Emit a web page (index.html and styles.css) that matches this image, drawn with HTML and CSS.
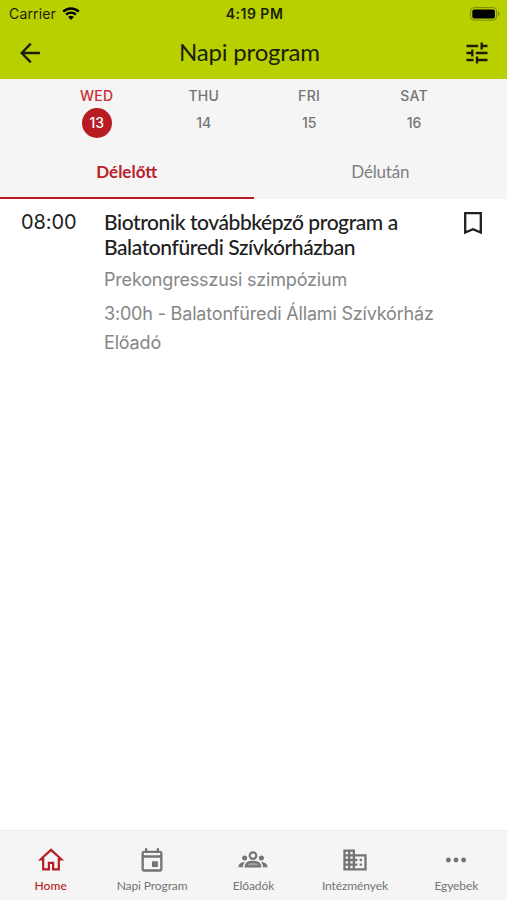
FILE: index.html
```html
<!DOCTYPE html>
<html lang="hu">
<head>
    <meta charset="UTF-8">
    <meta name="viewport" content="width=device-width, initial-scale=1.0">
    <title>Napi program</title>
    <link rel="stylesheet" href="styles.css">
</head>
<body>
    <div class="app">
        <header class="header">
            <div class="status-bar">
                <div class="carrier">
                    <span>Carrier</span>
                    <svg class="wifi" viewBox="0 0 18 13">
                        <path d="M1.2 4.6 A11.2 11.2 0 0 1 16.8 4.6" />
                        <path d="M4.1 7.6 A7 7 0 0 1 13.9 7.6" />
                        <path class="dot" d="M9 12.9 L6.2 10 A4 4 0 0 1 11.8 10 Z" />
                    </svg>
                </div>
                <span class="clock">4:19 PM</span>
                <svg class="battery" viewBox="0 0 30 14">
                    <rect class="case" x="0.6" y="0.6" width="26" height="12.6" rx="3.6" />
                    <rect x="2.3" y="2.4" width="22.6" height="9" rx="2" />
                    <path class="cap" d="M28 4.6 a2.6 2.6 0 0 1 0 4.6 z" />
                </svg>
            </div>
            <div class="toolbar">
                <svg class="icon back" viewBox="0 0 24 24"><path d="M20.5 12 H5 M12.7 4 L4.9 12 L12.7 20" /></svg>
                <h1>Napi program</h1>
                <svg class="icon" viewBox="0 0 24 24"><path d="M3 17v2h6v-2H3zM3 5v2h10V5H3zm10 16v-2h8v-2h-8v-2h-2v6h2zM7 9v2H3v2h4v2h2V9H7zm14 4v-2H11v2h10zm-6-4h2V7h4V5h-4V3h-2v6z" /></svg>
            </div>
        </header>

        <!-- Day picker -->
        <div class="days">
            <div class="day active"><span class="weekday">WED</span><span class="date">13</span></div>
            <div class="day"><span class="weekday">THU</span><span class="date">14</span></div>
            <div class="day"><span class="weekday">FRI</span><span class="date">15</span></div>
            <div class="day"><span class="weekday">SAT</span><span class="date">16</span></div>
        </div>

        <div class="tabs">
            <div class="tab active">Délelőtt</div>
            <div class="tab">Délután</div>
        </div>

        <main class="program">
            <article class="event">
                <div class="time">08:00</div>
                <div class="info">
                    <h2>Biotronik továbbképző program a<br>Balatonfüredi Szívkórházban</h2>
                    <p class="category">Prekongresszusi szimpózium</p>
                    <p class="place">3:00h - Balatonfüredi Állami Szívkórház</p>
                    <p class="speaker">Előadó</p>
                </div>
                <svg class="bookmark" viewBox="0 0 20 24"><path d="M2.2 2.2 H17.8 V21.5 L10 18.2 L2.2 21.5 Z" /></svg>
            </article>
        </main>

        <nav class="bottom-nav">
            <div class="nav-item active">
                <svg class="icon" viewBox="0 0 24 24"><path d="M12 3.3 L3.2 11.4 H5.3 V20 H10.2 V14.5 H13.8 V20 H18.7 V11.4 H20.8 Z" /></svg>
                <span class="nav-label">Home</span>
            </div>
            <div class="nav-item">
                <svg class="icon" viewBox="0 0 24 24"><path d="M19 4h-1V2h-2v2H8V2H6v2H5c-1.1 0-2 .9-2 2v14c0 1.1.9 2 2 2h14c1.1 0 2-.9 2-2V6c0-1.1-.9-2-2-2zm0 16H5V10h14v10zm0-12H5V6h14v2zm-7 5h5v5h-5z" /></svg>
                <span class="nav-label">Napi Program</span>
            </div>
            <div class="nav-item">
                <svg class="icon people" viewBox="0 0 30 24">
                    <circle class="ring" cx="15" cy="7.6" r="3.3" />
                    <path class="ring body" d="M7.8 18.3 C8 15.5 11 13.9 15 13.9 S22 15.5 22.2 18.3 Z" />
                    <circle cx="6.6" cy="10" r="2.5" />
                    <circle cx="23.4" cy="10" r="2.5" />
                    <path d="M0.5 19.3 C0.5 16.3 2.6 14 6.9 14 C5.6 15.3 5 17.3 5 19.3 Z" />
                    <path d="M29.5 19.3 C29.5 16.3 27.4 14 23.1 14 C24.4 15.3 25 17.3 25 19.3 Z" />
                </svg>
                <span class="nav-label">Előadók</span>
            </div>
            <div class="nav-item">
                <svg class="icon" viewBox="0 0 24 24"><path d="M12 7V3H2v18h20V7H12zM6 19H4v-2h2v2zm0-4H4v-2h2v2zm0-4H4V9h2v2zm0-4H4V5h2v2zm4 12H8v-2h2v2zm0-4H8v-2h2v2zm0-4H8V9h2v2zm0-4H8V5h2v2zm10 12h-8v-2h2v-2h-2v-2h2v-2h-2V9h8v10zm-2-8h-2v2h2v-2zm0 4h-2v2h2v-2z" /></svg>
                <span class="nav-label">Intézmények</span>
            </div>
            <div class="nav-item">
                <svg class="icon" viewBox="0 0 24 24"><circle cx="5.5" cy="12" r="2.1" /><circle cx="12" cy="12" r="2.1" /><circle cx="18.5" cy="12" r="2.1" /></svg>
                <span class="nav-label">Egyebek</span>
            </div>
        </nav>
    </div>
</body>
</html>
```

FILE: styles.css
```css
* {
    margin: 0;
    padding: 0;
    box-sizing: border-box;
}

body {
    font-family: Inter, "Liberation Sans", sans-serif;
    background-color: #fff;
    color: #202020;
}

svg {
    display: block;
    flex: none;
    fill: currentColor;
}

.app {
    height: 900px;
    display: flex;
    flex-direction: column;
    overflow: hidden;
}

.header {
    height: 79px;
    background-color: #b8cf00;
    color: #1c1f08;
}

.status-bar {
    height: 27px;
    padding: 0 7px 0 9px;
    display: grid;
    grid-template-columns: 1fr auto 1fr;
    align-items: center;
    font-size: 14px;
}

.carrier {
    display: flex;
    align-items: center;
    gap: 6px;
    letter-spacing: 0.15px;
}

.wifi {
    width: 18px;
    height: 13px;
    fill: none;
    stroke: #000;
    stroke-width: 2.4;
}

.wifi .dot {
    fill: #000;
    stroke: none;
}

.clock {
    font-weight: 600;
    letter-spacing: 0.5px;
}

.battery {
    width: 30px;
    height: 14px;
    justify-self: end;
    fill: #000;
}

.battery .case {
    fill: none;
    stroke: #7c8b0b;
}

.battery .cap {
    fill: #7c8b0b;
}

.toolbar {
    height: 50px;
    padding: 1px 16px 0 16px;
    display: grid;
    grid-template-columns: 28px 1fr 28px;
    align-items: center;
}

.icon {
    width: 28px;
    height: 28px;
}

.back {
    fill: none;
    stroke: currentColor;
    stroke-width: 2;
}

h1 {
    padding: 0 8px 2px 0;
    font-family: Lato, sans-serif;
    font-size: 24px;
    font-weight: 400;
    letter-spacing: -0.2px;
    text-align: center;
}

.days {
    height: 68px;
    padding: 8px 78px 0 80px;
    display: flex;
    justify-content: space-between;
    background-color: #f5f5f5;
    color: #747474;
    font-size: 14px;
    font-weight: 500;
}

.day {
    display: flex;
    flex-direction: column;
    align-items: center;
}

.weekday {
    line-height: 18px;
    letter-spacing: 0.3px;
}

.date {
    width: 30px;
    height: 30px;
    margin-top: 3px;
    border-radius: 50%;
    line-height: 30px;
    text-align: center;
}

.day.active {
    color: #c5303a;
}

.day.active .date {
    background-color: #b71c22;
    color: #fff;
}

.tabs {
    height: 52px;
    display: grid;
    grid-template-columns: 1fr 1fr;
    background-color: #f5f5f5;
    font-family: Lato, sans-serif;
    font-size: 17px;
    color: #808080;
}

.tab {
    line-height: 50px;
    letter-spacing: -0.2px;
    text-align: center;
}

.tab.active {
    color: #b8202a;
    font-weight: 700;
    letter-spacing: 0;
    border-bottom: 2px solid #b71c22;
}

.program {
    flex: 1;
}

.event {
    padding: 10px 24px 0 21px;
    display: flex;
    align-items: flex-start;
}

.time {
    width: 83px;
    font-size: 20px;
    line-height: 27px;
    letter-spacing: -0.1px;
}

.info {
    flex: 1;
    color: #868686;
    font-size: 18px;
    letter-spacing: -0.18px;
    white-space: nowrap;
}

h2 {
    font-family: Lato, sans-serif;
    font-size: 21px;
    font-weight: 500;
    line-height: 25px;
    letter-spacing: -0.42px;
    color: #202020;
}

.category {
    margin-top: 8px;
    line-height: 25px;
}

.place {
    margin-top: 9px;
    line-height: 25px;
}

.speaker {
    margin-top: 5px;
    line-height: 24px;
}

.bookmark {
    width: 20px;
    height: 24px;
    margin-top: 2px;
    fill: none;
    stroke: #202020;
    stroke-width: 2.3;
}

.bottom-nav {
    height: 70px;
    padding-top: 15px;
    display: grid;
    grid-template-columns: repeat(5, 1fr);
    background-color: #f5f5f5;
    border-top: 1px solid #efefef;
    color: #747474;
}

.nav-item {
    display: flex;
    flex-direction: column;
    align-items: center;
}

.nav-item.active {
    color: #b71c22;
}

.nav-item.active .icon {
    fill: none;
    stroke: currentColor;
    stroke-width: 1.9;
}

.people {
    width: 30px;
}

.people .ring {
    fill: none;
    stroke: currentColor;
    stroke-width: 2.2;
}

.people .body {
    fill: #a0a0a0;
}

.nav-label {
    margin-top: 4px;
    font-family: Lato, sans-serif;
    font-size: 12px;
    line-height: 16px;
    letter-spacing: -0.1px;
}

.nav-item.active .nav-label {
    font-weight: 500;
    letter-spacing: 0.1px;
}
```
